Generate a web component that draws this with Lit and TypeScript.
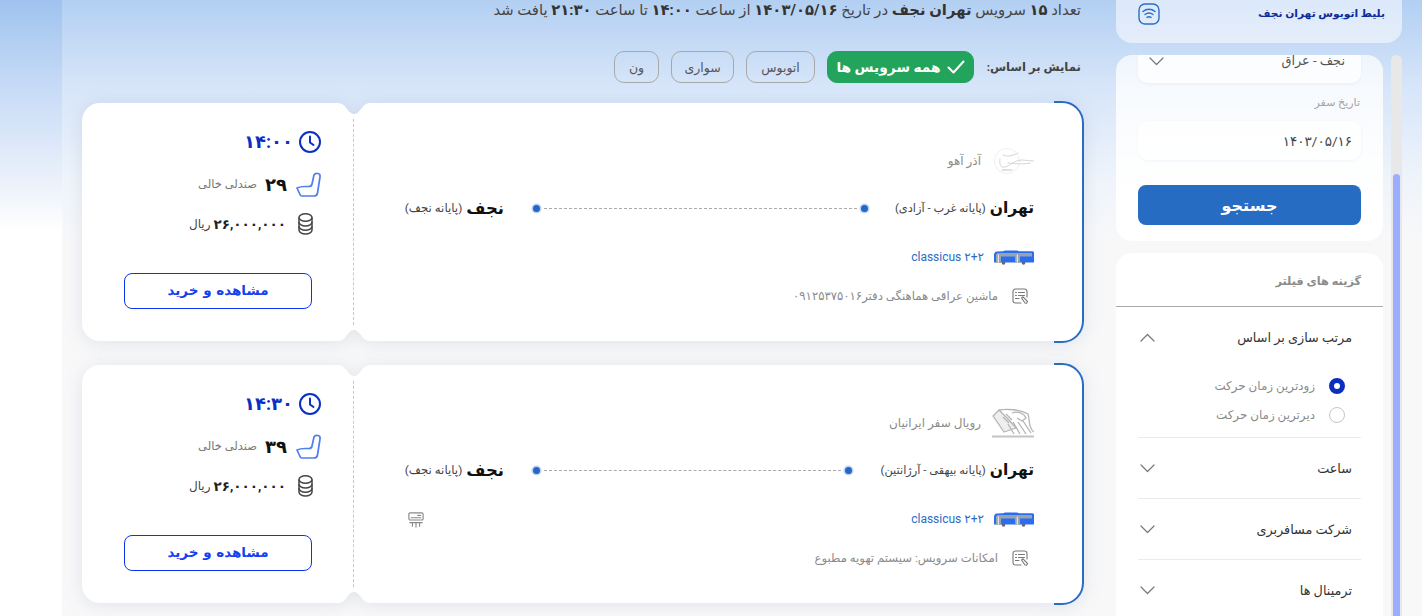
import { LitElement, html, css, svg } from "lit";
import { customElement } from "lit/decorators.js";

const CARD_PATH =
  "M18 0H255C260 0 262 2 265 6C268 10 270 11 272 11C274 11 276 10 279 6C282 2 284 0 289 0H982A20 20 0 0 1 1002 20V218A20 20 0 0 1 982 238H289C284 238 282 236 279 232C276 228 274 227 272 227C270 227 268 228 265 232C262 236 260 238 255 238H18A18 18 0 0 1 0 220V18A18 18 0 0 1 18 0Z";

const clock = html`<svg width="22" height="22" viewBox="0 0 22 22" fill="none" stroke="#0a2fc4" stroke-width="2" stroke-linecap="round" stroke-linejoin="round"><circle cx="11" cy="11" r="10"/><path d="M11 5.5V11.5L14.5 14"/></svg>`;
const seat = html`<svg width="25" height="25" viewBox="0 0 25 25" fill="none" stroke="#4f7df2" stroke-width="1.7" stroke-linejoin="round"><path d="M18 3Q19 1 22 1.5Q24.5 2 24 5L21.5 21Q21 24 18 24H6Q4.5 24 4 22.5L1 16Q4 14.5 9 14.5H13Q15.5 14.5 16 12Z"/></svg>`;
const coins = html`<svg width="15" height="22" viewBox="0 0 15 22" fill="none" stroke="#444" stroke-width="1.5"><ellipse cx="7.5" cy="4.5" rx="6.5" ry="3.7"/><path d="M1 4.5V17C1 19.2 4 21 7.5 21S14 19.2 14 17V4.5"/><path d="M1 9C1 11.2 4 13 7.5 13S14 11.2 14 9"/><path d="M1 13.2C1 15.4 4 17.2 7.5 17.2S14 15.4 14 13.2"/></svg>`;
const bus = html`<svg width="40" height="15" viewBox="0 0 40 15"><path d="M1 2.5Q1 1.6 3 1.6L9 1.2 11 0.6H23L25 1.2H38Q40 1.2 40 2.5V12.5H0V4Z" fill="#2b6df0"/><rect x="3" y="3" width="35" height="3.5" fill="#9aa3ad"/><rect x="2" y="4" width="5" height="9" fill="#9aa3ad"/><rect x="3.8" y="4.5" width="1" height="8.5" fill="#eee"/><rect x="21" y="4" width="5" height="9" fill="#9aa3ad"/><rect x="22.8" y="4.5" width="1" height="8.5" fill="#eee"/><circle cx="9.5" cy="13" r="1.8" fill="#667"/><circle cx="29.5" cy="13" r="1.8" fill="#667"/></svg>`;
const note = html`<svg width="16" height="16" viewBox="0 0 16 16" fill="none" stroke="#777" stroke-width="1.1" stroke-linecap="round" stroke-linejoin="round"><path d="M9 15H3.5A2.5 2.5 0 0 1 1 12.5V3.5A2.5 2.5 0 0 1 3.5 1H12.5A2.5 2.5 0 0 1 15 3.5V9"/><path d="M3.5 4.5H4.5M6.5 4.5H12.5M3.5 7.5H4.5M6.5 7.5H12.5M3.5 10.5H7"/><path d="M9.5 10L11 8.8 15.5 13.5 14.6 15.2 13 15Z"/></svg>`;
const ac = html`<svg class="ac" width="16" height="16" viewBox="0 0 18 18" fill="none" stroke="#8a8a8a" stroke-width="1.3" stroke-linecap="round"><rect x="1" y="1" width="16" height="8" rx="1.5"/><path d="M3.5 6.5H14.5M11 3.8H14"/><path d="M2 12H16M5 12V16M9 12V17M13 12V16"/></svg>`;
const wifi = html`<svg width="22" height="22" viewBox="0 0 22 22" fill="none" stroke="#2a6fc6" stroke-width="1.4" stroke-linecap="round"><rect x="1" y="1" width="20" height="20" rx="6"/><path d="M5 8.5C8.5 5.5 13.5 5.5 17 8.5"/><path d="M7 11.5C9.5 9.7 12.5 9.7 15 11.5"/><path d="M9 14.4C10.3 13.6 11.7 13.6 13 14.4"/></svg>`;
const check = html`<svg width="18" height="14" viewBox="0 0 18 14" fill="none" stroke="#fff" stroke-width="2" stroke-linecap="round" stroke-linejoin="round"><path d="M1.5 7.5L6.5 12.5L16.5 1.5"/></svg>`;
const chevDown = html`<svg width="15" height="9" viewBox="0 0 15 9" fill="none" stroke="#777" stroke-width="1.2" stroke-linecap="round" stroke-linejoin="round"><path d="M1 1L7.5 7.5L14 1"/></svg>`;
const chevUp = html`<svg width="15" height="9" viewBox="0 0 15 9" fill="none" stroke="#777" stroke-width="1.2" stroke-linecap="round" stroke-linejoin="round"><path d="M1 8L7.5 1.5L14 8"/></svg>`;

const logoA = html`<svg width="40" height="28" viewBox="0 0 40 28" fill="none" stroke="#d6d6d6" stroke-width="1" stroke-linecap="round"><circle cx="13" cy="14" r="12.5" stroke="#f0f0f0"/><path d="M6 12C5 18 7 21 11 20C16 19 20 13 28 13C32 13 36 14 40 14"/><path d="M9 8C14 10 18 9 24 6"/><path d="M14 16C20 16 26 18 36 16"/><path d="M8 23H18" stroke="#c4c4c4"/></svg>`;
const logoB = html`<svg width="42" height="30" viewBox="0 0 42 30" fill="none" stroke="#b4b4b4" stroke-width="1.3" stroke-linejoin="round"><path d="M1 8L7 2 17 12 24 20 12 24Z" fill="#eee"/><path d="M7 2C14 1 28 1 36 6C38 12 36 20 42 24"/><path d="M20 5C26 3 32 5 34 10L30 13 25 10"/><path d="M11 9L17 15M14 6L20 12M16 16L22 26M21 14L28 26M26 14L34 26M31 13L39 25"/><path d="M0 28.5H42" stroke="#c4c4c4" stroke-width="2"/></svg>`;

interface Trip {
  logo: unknown;
  company: string;
  time: string;
  seats: string;
  terminal: string;
  dotGap: number;
  noteText: string;
  ac: boolean;
}

const trips: Trip[] = [
  { logo: logoA, company: "آذر آهو", time: "۱۴:۰۰", seats: "۲۹", terminal: "(پایانه غرب - آزادی)", dotGap: 27, noteText: "ماشین عراقی هماهنگی دفتر۰۹۱۲۵۳۷۵۰۱۶", ac: false },
  { logo: logoB, company: "رویال سفر ایرانیان", time: "۱۴:۳۰", seats: "۳۹", terminal: "(پایانه بیهقی - آرژانتین)", dotGap: 29, noteText: "امکانات سرویس: سیستم تهویه مطبوع", ac: true },
];

@customElement("trip-card")
class TripCard extends LitElement {
  static properties = { trip: { attribute: false } };
  trip!: Trip;
  static styles = css`
    :host { display: block; position: relative; width: 1002px; height: 238px; margin-bottom: 24px; }
    .shape { position: absolute; inset: 0; overflow: visible; filter: drop-shadow(0 2px 9px rgba(70, 90, 130, 0.13)); }
    .grid { position: relative; display: grid; grid-template-columns: 1fr 1px 271px; height: 100%; }
    .info { padding: 38px 50px 0 49px; min-width: 0; }
    .rule { border-right: 1px dashed #bccbdf; margin: 16px 0 16px; }
    .company { display: flex; align-items: center; gap: 11px; height: 40px; color: #8c8c8c; font-size: 12px; }
    .logo { width: 42px; display: flex; justify-content: flex-start; }
    .route { display: flex; align-items: center; height: 30px; margin-top: 12px; white-space: nowrap; }
    .origin { flex: none; display: flex; align-items: center; gap: 4px; }
    .city { font-size: 15.5px; font-weight: 700; color: #111; }
    .term { font-size: 11.4px; color: #444; }
    .dest .city { font-size: 16.5px; }
    .dest .term { font-size: 11.8px; }
    .dot { flex: none; width: 7px; height: 7px; border-radius: 50%; background: #2468c4; box-shadow: 0 0 0 1.5px rgba(70, 130, 220, 0.35); }
    .line { flex: 1; border-top: 1px dashed #aaa; margin: 0 4px; }
    .dest { flex: none; width: 101px; display: flex; align-items: center; gap: 4px; margin-right: 29px; }
    .busrow { display: flex; align-items: center; justify-content: space-between; height: 20px; margin-top: 24px; }
    .bus { display: flex; align-items: center; gap: 10px; color: #2a6cc4; font-size: 12px; font-weight: 400; }
    .bus svg { display: block; }
    .ac { margin: 1px 0 0 5px; }
    .noterow { display: flex; align-items: center; gap: 14px; height: 20px; margin-top: 19px; padding-right: 6px; color: #8a8a8a; font-size: 11.7px; white-space: nowrap; }
    .noterow svg { flex: none; }
    .buy { padding: 25px 32px 0 41px; }
    .row { display: flex; align-items: center; height: 28px; white-space: nowrap; }
    .icell { width: 28px; flex: none; display: flex; align-items: center; }
    .time { color: #0a2fc4; font-size: 18px; font-weight: 700; line-height: 28px; }
    .r2 { margin-top: 14px; }
    .r3 { margin-top: 12px; }
    .seats { font-size: 18px; font-weight: 700; color: #111; margin: 0 6px 0 8px; }
    .sm { font-size: 11.5px; color: #777; }
    .r3 .icell svg { margin-right: 8px; }
    .price { font-size: 13.5px; font-weight: 700; color: #222; margin: 0 7px 0 3px; }
    .rial { font-size: 12px; color: #444; }
    button { display: block; box-sizing: border-box; width: 188px; height: 36px; margin: 35px 9px 0 0; border: 1px solid #0a35f0; border-radius: 8px; background: #fff; color: #1440f0; font: 700 13.5px "DejaVu Sans", sans-serif; padding: 0 0 3px; }
  `;
  render() {
    const t = this.trip;
    return html`
      <svg class="shape" width="1002" height="238" viewBox="0 0 1002 238">
        ${svg`<path d=${CARD_PATH} fill="#fff"/>`}
        ${svg`<path d="M972 -1H980A21 21 0 0 1 1001 20V218A21 21 0 0 1 980 239H972" fill="none" stroke="#2a6cc4" stroke-width="2"/>`}
      </svg>
      <div class="grid">
        <div class="info">
          <div class="company"><div class="logo">${t.logo}</div><span>${t.company}</span></div>
          <div class="route">
            <div class="origin"><span class="city">تهران</span><span class="term">${t.terminal}</span></div>
            <span class="dot" style="margin-right:${t.dotGap}px"></span>
            <span class="line"></span>
            <span class="dot"></span>
            <div class="dest"><span class="city">نجف</span><span class="term">(پایانه نجف)</span></div>
          </div>
          <div class="busrow">
            <div class="bus">${bus}<span>۲+۲ classicus</span></div>
            ${t.ac ? ac : ""}
          </div>
          <div class="noterow">${note}<span>${t.noteText}</span></div>
        </div>
        <div class="rule"></div>
        <div class="buy">
          <div class="row"><div class="icell">${clock}</div><span class="time">${t.time}</span></div>
          <div class="row r2"><div class="icell">${seat}</div><span class="seats">${t.seats}</span><span class="sm">صندلی خالی</span></div>
          <div class="row r3"><div class="icell">${coins}</div><span class="price">۲۶,۰۰۰,۰۰۰</span><span class="rial">ریال</span></div>
          <button>مشاهده و خرید</button>
        </div>
      </div>
    `;
  }
}

@customElement("app-root")
class AppRoot extends LitElement {
  static styles = css`
    :host { display: block; height: 616px; overflow: hidden; background: linear-gradient(#9fc3ee, #c4d9f6 80px, #eef3fb 190px, #fff 232px); font-family: Roboto, "DejaVu Sans", sans-serif; }
    .page { direction: rtl; display: flex; height: 616px; margin-left: 62px; background: linear-gradient(#b2cff2, #d6e5f9 85px, #eff4fb 180px, #f8f8f9 240px); }
    .side { flex: none; width: 286px; margin-right: 20px; }
    .topcard { box-sizing: border-box; height: 43px; border-radius: 0 0 16px 16px; background: linear-gradient(#dce9fb, #e5edf9); display: flex; align-items: flex-start; justify-content: space-between; padding: 3px 17px 0 22px; }
    .topcard span { color: #0d2c9a; font-size: 10.7px; font-weight: 700; line-height: 22px; white-space: nowrap; }
    .side-body { display: flex; gap: 8px; margin-top: 12px; }
    .track { flex: none; box-sizing: border-box; width: 11px; height: 561px; padding: 119px 2px 0; background: #e8e8e8; border-radius: 6px 6px 0 0; }
    .thumb { height: 100%; background: #9badff; border-radius: 4px 4px 0 0; }
    .panels { flex: none; width: 267px; }
    .search { box-sizing: border-box; height: 186px; padding: 0 22px; border-radius: 16px; overflow: hidden; background: linear-gradient(rgba(255,255,255,.72), #fff 85%); }
    .field { box-sizing: border-box; display: flex; align-items: center; justify-content: space-between; border-radius: 0 0 10px 10px; background: rgba(255,255,255,.75); box-shadow: 0 1px 3px rgba(90,110,150,.07); }
    .f1 { height: 28px; padding: 0 16px 16px 11px; color: #555; font-size: 12.9px; line-height: 12px; white-space: nowrap; }
    .label { margin-top: 12px; height: 16px; line-height: 16px; color: #a5a5a5; font-size: 11px; padding-right: 1px; }
    .f2 { height: 39px; margin-top: 10px; padding: 0 9px; border-radius: 10px; color: #444; font-size: 13.5px; }
    .go { display: block; width: 100%; height: 40px; margin-top: 25px; border: 0; border-radius: 8px; padding: 0; background: #266cc3; color: #fff; font: 700 16px "DejaVu Sans", sans-serif; }
    .filters { margin-top: 12px; height: 400px; border-radius: 16px 16px 0 0; background: #fff; }
    .fhead { box-sizing: border-box; height: 54px; padding: 19px 22px 0; border-bottom: 1px solid #aaa; color: #8c8c8c; font-size: 11.3px; font-weight: 700; line-height: 20px; }
    .sec { margin: 0 22px; border-bottom: 1px solid #ebebeb; }
    .sec:last-child { border-bottom: 0; }
    .sechead { display: flex; align-items: center; justify-content: space-between; height: 60px; padding: 0 9px 0 2px; color: #333; font-size: 12.8px; font-weight: 500; }
    .first { padding-bottom: 8px; }
    .first .sechead { height: 60px; margin-bottom: 4px; }
    .radio { display: flex; align-items: center; gap: 14px; height: 29px; padding-right: 16px; color: #8a8a8a; font-size: 11.9px; }
    .ring { box-sizing: border-box; width: 16px; height: 16px; border-radius: 50%; border: 1px solid #c5c5c5; background: #fff; }
    .ring.on { border: 5px solid #0a2fc0; }
    .main { flex: 1; min-width: 0; padding: 0 32px 0 20px; }
    .summary { height: 20px; line-height: 20px; padding-right: 3px; color: #444; font-size: 14.8px; white-space: nowrap; }
    .summary b { color: #333; }
    .chips { display: flex; align-items: center; gap: 12px; height: 32px; margin: 31px 3px 20px 0; }
    .chips .t { flex: none; width: 95px; color: #444; font-size: 11.7px; font-weight: 700; white-space: nowrap; }
    .chip { box-sizing: border-box; height: 32px; display: flex; align-items: center; justify-content: center; border: 1px solid #a8a8a8; border-radius: 10px; color: #555; font-size: 12.5px; }
    .chip.on { width: 147px; gap: 6px; background: #22a45d; border-color: #22a45d; color: #fff; font-weight: 700; font-size: 13.8px; }
    .c1 { width: 69px; } .c2 { width: 63px; } .c3 { width: 45px; }
  `;
  render() {
    return html`
      <div class="page">
        <aside class="side">
          <div class="topcard"><span>بلیط اتوبوس تهران نجف</span>${wifi}</div>
          <div class="side-body">
            <div class="track"><div class="thumb"></div></div>
            <div class="panels">
              <div class="search">
                <div class="field f1"><span>نجف - عراق</span>${chevDown}</div>
                <div class="label">تاریخ سفر</div>
                <div class="field f2">۱۴۰۳/۰۵/۱۶</div>
                <button class="go">جستجو</button>
              </div>
              <div class="filters">
                <div class="fhead">گزینه های فیلتر</div>
                <div class="sec first">
                  <div class="sechead"><span>مرتب سازی بر اساس</span>${chevUp}</div>
                  <div class="radio"><span class="ring on"></span><span>زودترین زمان حرکت</span></div>
                  <div class="radio"><span class="ring"></span><span>دیرترین زمان حرکت</span></div>
                </div>
                <div class="sec"><div class="sechead"><span>ساعت</span>${chevDown}</div></div>
                <div class="sec"><div class="sechead"><span>شرکت مسافربری</span>${chevDown}</div></div>
                <div class="sec"><div class="sechead"><span>ترمینال ها</span>${chevDown}</div></div>
              </div>
            </div>
          </div>
        </aside>
        <main class="main">
          <div class="summary">تعداد <b>۱۵</b> سرویس <b>تهران نجف</b> در تاریخ <b>۱۴۰۳/۰۵/۱۶</b> از ساعت <b>۱۴:۰۰</b> تا ساعت <b>۲۱:۳۰</b> یافت شد</div>
          <div class="chips">
            <span class="t">نمایش بر اساس:</span>
            <div class="chip on">${check}<span>همه سرویس ها</span></div>
            <div class="chip c1">اتوبوس</div>
            <div class="chip c2">سواری</div>
            <div class="chip c3">ون</div>
          </div>
          ${trips.map((t) => html`<trip-card .trip=${t}></trip-card>`)}
        </main>
      </div>
    `;
  }
}
